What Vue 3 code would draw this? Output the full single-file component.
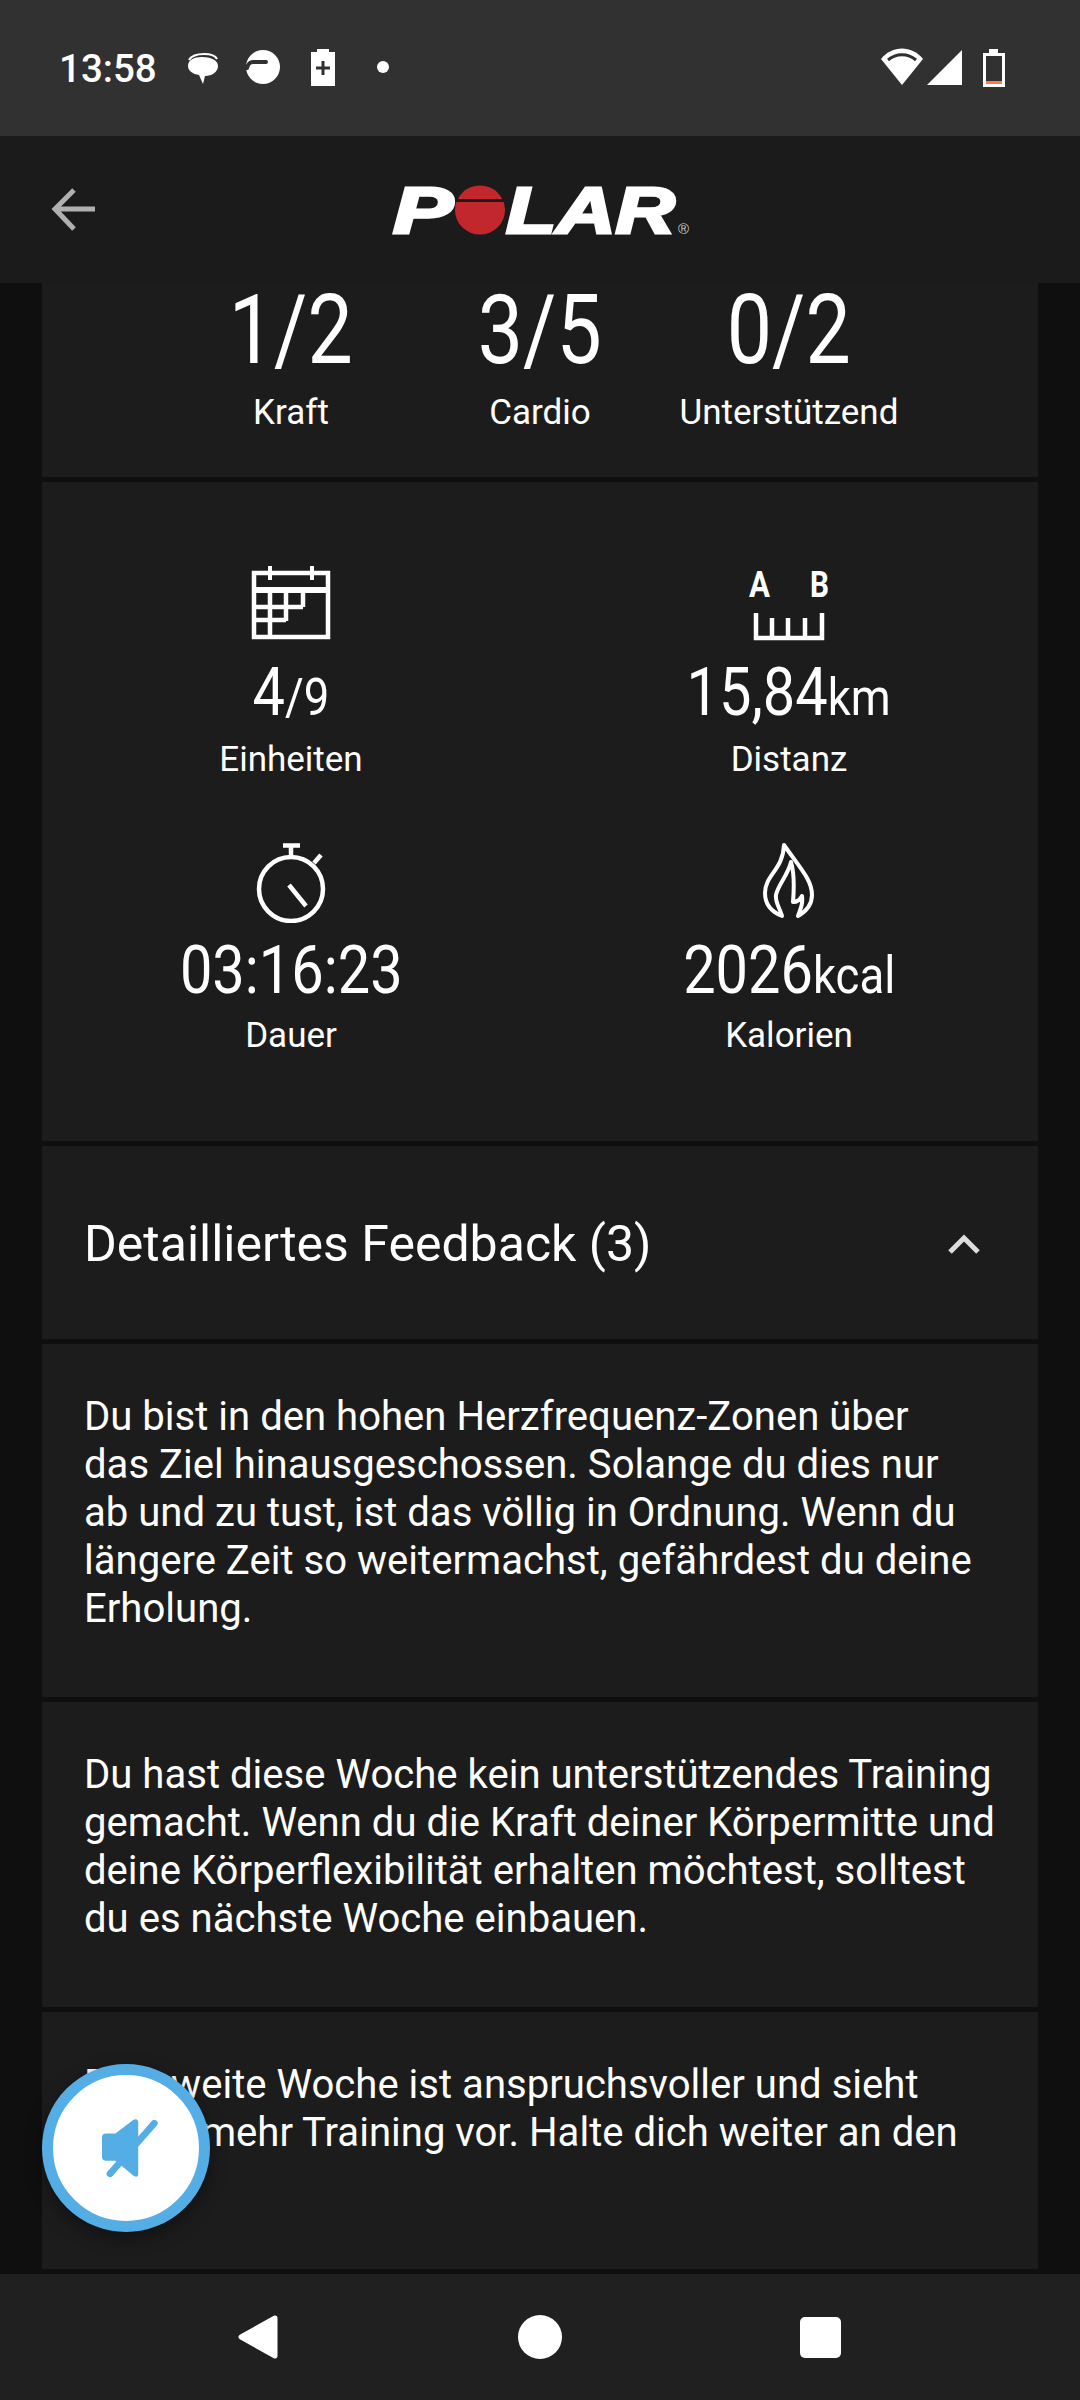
<template>
  <div class="phone">
    <div class="statusbar">
      <span class="time">13:58</span>
      <svg class="status-left" width="210" height="44" viewBox="180 48 210 44">
        <path d="M189 62c3-5 9-6 15-6s11 1 13 5" fill="none" stroke="#fff" stroke-width="2"/>
        <path d="M188 68c0-6 6-9 14-9s16 3 16 9-6 10-13 10l-2 8-4-9c-6-1-11-4-11-9z" fill="#fff"/>
        <circle cx="263" cy="69" r="17" fill="#fff"/>
        <path d="M247 70c1-4 3-6 6-6h13" fill="none" stroke="#313131" stroke-width="4" stroke-linecap="round"/>
        <path d="M317 51h12v3h6v34h-24V54h6z" fill="#fff"/>
        <path d="M323 63v14M316 70h14" stroke="#313131" stroke-width="3"/>
        <circle cx="383" cy="69" r="6" fill="#fff"/>
      </svg>
      <svg class="status-right" width="130" height="44" viewBox="878 46 130 44">
        <path d="M881 59C892 45 912 45 923 59L902 85z" fill="#fff"/>
        <path d="M888 60c8-7 20-7 28 0" fill="none" stroke="#313131" stroke-width="3"/>
        <path d="M927 85 962 50v35z" fill="#fff"/>
        <path d="M989 49h9v4h7v34h-22V53h6z" fill="#fff"/>
        <rect x="986" y="56" width="16" height="28" fill="#313131"/>
        <rect x="986" y="81" width="16" height="3" fill="#ff7a50"/>
      </svg>
    </div>

    <header class="appbar">
      <svg class="back" width="48" height="48" viewBox="50 185 48 48">
        <path d="M95 209H56M74 190 55 209l19 20" fill="none" stroke="#b0b0b0" stroke-width="5"/>
      </svg>
      <svg class="logo" width="300" height="90" viewBox="392 164 300 90">
        <text class="logo-txt" x="393" y="232" textLength="60" lengthAdjust="spacingAndGlyphs">P</text>
        <ellipse cx="480" cy="209" rx="25" ry="24.500" fill="#c1272d"/>
        <rect x="455" y="198" width="50" height="3" fill="#1b1b1b"/>
        <text class="logo-txt" x="506" y="232" textLength="169" lengthAdjust="spacingAndGlyphs">LAR</text>
        <text class="logo-r" x="678" y="233">®</text>
      </svg>
    </header>

    <main class="content">
      <section class="card top-card">
        <div v-for="s in topStats" :key="s.label" class="top-stat">
          <span class="big cond">{{ s.value }}</span>
          <span class="label">{{ s.label }}</span>
        </div>
      </section>

      <section class="card stats-card">
        <div class="stat">
          <svg class="icon" width="100" height="80" viewBox="241 562 100 80">
            <g fill="none" stroke="#fff" stroke-width="4.500">
              <rect x="254" y="573" width="74" height="64"/>
              <path d="M254 590h74" stroke-width="6"/>
              <path d="M270 566v14M312 566v14" stroke-width="4"/>
              <path d="M270 590v47M286 590v31M303 590v17M254 607h49M254 620h32"/>
            </g>
          </svg>
          <div class="num cond">4<small>/9</small></div>
          <span class="label">Einheiten</span>
        </div>
        <div class="stat">
          <svg class="icon" width="100" height="80" viewBox="739 562 100 80">
            <text class="ab" x="749" y="597" textLength="21" lengthAdjust="spacingAndGlyphs">A</text>
            <text class="ab" x="810" y="597" textLength="19" lengthAdjust="spacingAndGlyphs">B</text>
            <path d="M756 613v25h66v-25M772 618v18M788 618v18M805 618v18" fill="none" stroke="#fff" stroke-width="4.500"/>
          </svg>
          <div class="num cond">15,84<small>km</small></div>
          <span class="label">Distanz</span>
        </div>
        <div class="stat">
          <svg class="icon" width="100" height="80" viewBox="241 843 100 80">
            <g fill="none" stroke="#fff" stroke-width="4.500">
              <circle cx="291" cy="889" r="32"/>
              <path d="M291 846v10M283 845.500h17M314 863l7-8M289 885l17 21"/>
            </g>
          </svg>
          <div class="num cond">03:16:23</div>
          <span class="label">Dauer</span>
        </div>
        <div class="stat">
          <svg class="icon" width="100" height="80" viewBox="739 843 100 80">
            <path d="M784 845c16 23 28 35 28 50 0 10-7 17-14 21 3-8 5-13 4-20-2 4-6 6-9 6 1-12 2-27-2-40-3 13-13 23-15 33-1 8 4 13 6 21-10-4-17-11-17-23 0-18 18-23 19-48z" fill="none" stroke="#fff" stroke-width="4" stroke-linejoin="round"/>
          </svg>
          <div class="num cond">2026<small>kcal</small></div>
          <span class="label">Kalorien</span>
        </div>
      </section>

      <section class="card feedback-head">
        <span class="feedback-title">Detailliertes Feedback (3)</span>
        <svg class="chevron" width="34" height="22" viewBox="0 0 34 22">
          <path d="M3 19 17 5l14 14" fill="none" stroke="#ddd" stroke-width="5"/>
        </svg>
      </section>

      <section v-for="(t, i) in feedback" :key="i" class="card feedback" :class="{ last: i === feedback.length - 1 }">
        <p>{{ t }}</p>
      </section>

      <button class="fab">
        <svg width="57" height="64" viewBox="220 200 170 190">
          <path d="M220 264q0-12 12-12h28l52-40q16-8 16 8v152q0 14-14 6l-54-45h-28q-12 0-12-12z" fill="#55ade5"/>
          <path d="M244 372 376 221" stroke="#55ade5" stroke-width="20" stroke-linecap="round"/>
        </svg>
      </button>
    </main>

    <nav class="navbar">
      <svg width="44" height="48" viewBox="0 0 44 48">
        <path d="M38 5 4 24l34 19z" fill="#fff" stroke="#fff" stroke-width="5" stroke-linejoin="round"/>
      </svg>
      <span class="nav-dot"></span>
      <span class="nav-square"></span>
    </nav>
  </div>
</template>

<script setup>
const topStats = [
  { value: '1/2', label: 'Kraft' },
  { value: '3/5', label: 'Cardio' },
  { value: '0/2', label: 'Unterstützend' }
]

// Zeilenumbrüche wie in der App
const feedback = [
  'Du bist in den hohen Herzfrequenz-Zonen über\ndas Ziel hinausgeschossen. Solange du dies nur\nab und zu tust, ist das völlig in Ordnung. Wenn du\nlängere Zeit so weitermachst, gefährdest du deine\nErholung.',
  'Du hast diese Woche kein unterstützendes Training\ngemacht. Wenn du die Kraft deiner Körpermitte und\ndeine Körperflexibilität erhalten möchtest, solltest\ndu es nächste Woche einbauen.',
  'Die zweite Woche ist anspruchsvoller und sieht\netwas mehr Training vor. Halte dich weiter an den'
]
</script>

<style scoped>
* { box-sizing: border-box; }

.phone {
  width: 1080px; height: 2400px;
  display: flex; flex-direction: column;
  background: #0f0f0f; color: #fff;
  font-family: Roboto, sans-serif;
  overflow: hidden;
}

.statusbar {
  height: 136px; flex: none;
  background: #313131;
  display: flex; align-items: center;
  padding: 0 72px 0 59px;
}
.time { font-size: 38.500px; font-weight: 500; width: 121px; }
.status-right { margin-left: auto; }

.appbar {
  height: 147px; flex: none;
  background: #1b1b1b;
  position: relative;
  display: flex; align-items: center; justify-content: center;
}
.back { position: absolute; left: 50px; top: 49px; }
.logo { margin-left: 4px; }
.logo-txt {
  font-family: "Liberation Sans", sans-serif;
  font-size: 65px; font-weight: 700; font-style: italic;
  fill: #fff; stroke: #fff; stroke-width: 3px;
}
.logo-r { font-family: "Liberation Sans", sans-serif; font-size: 15px; fill: #ccc; }

.content {
  flex: 1; min-height: 0;
  display: flex; flex-direction: column; gap: 5px;
  padding: 0 42px 5px;
  position: relative;
}
.card { background: #1c1c1c; flex: none; }

.top-card {
  height: 194px;
  display: grid;
  grid-template-columns: repeat(3, 249px);
  justify-content: center;
}
.top-stat { display: flex; flex-direction: column; align-items: center; }
.big { font-size: 96px; line-height: 110px; white-space: nowrap; margin-top: -8px; transform: scaleX(0.84); }
.label { font-size: 35px; line-height: 40px; margin-top: 8px; white-space: nowrap; }
.cond { display: inline-block; }

.stats-card {
  height: 659px;
  padding-top: 80px;
  display: grid;
  grid-template-columns: 498px 498px;
  grid-auto-rows: 281px;
}
.stat { display: flex; flex-direction: column; align-items: center; }
.stat .label { margin-top: 3px; }
.stat:nth-child(-n+2) .num { margin-top: 9px; }
.stat:nth-child(-n+2) .label { margin-top: 5px; }
.num { font-size: 66px; line-height: 84px; margin-top: 6px; white-space: nowrap; transform: scaleX(0.875); }
.num small { font-size: 52px; line-height: 1; }
.ab { font-family: Roboto, sans-serif; font-size: 36px; font-weight: 700; fill: #fff; }

.feedback-head {
  height: 193px;
  display: flex; align-items: center; justify-content: space-between;
  padding: 2px 57px 0 42px;
}
.feedback-title { font-size: 50px; }

.feedback { padding: 49px 42px 0; }
.feedback p { margin: 0; font-size: 40.100px; line-height: 48px; white-space: pre-line; }
.feedback:nth-of-type(4) { height: 353px; }
.feedback:nth-of-type(5) { height: 305px; }
.feedback.last { flex: 1; }

.fab {
  position: absolute; left: 42px; top: 1781px;
  width: 168px; height: 168px;
  padding: 0 0 0 8px;
  border: 11px solid #55ade5; border-radius: 50%;
  background: #fff;
  box-shadow: 0 6px 18px rgba(0, 0, 0, 0.4);
  display: flex; align-items: center; justify-content: center;
}

.navbar {
  height: 126px; flex: none;
  background: #202020;
  display: grid;
  grid-template-columns: 239px 44px 235px 44px 238px 41px;
  align-items: center;
}
.navbar svg { grid-column: 2; margin-left: -2px; }
.nav-dot {
  grid-column: 4;
  width: 44px; height: 44px;
  background: #fff; border-radius: 50%;
}
.nav-square {
  grid-column: 6;
  width: 41px; height: 41px;
  background: #fff; border-radius: 5px;
}
</style>
